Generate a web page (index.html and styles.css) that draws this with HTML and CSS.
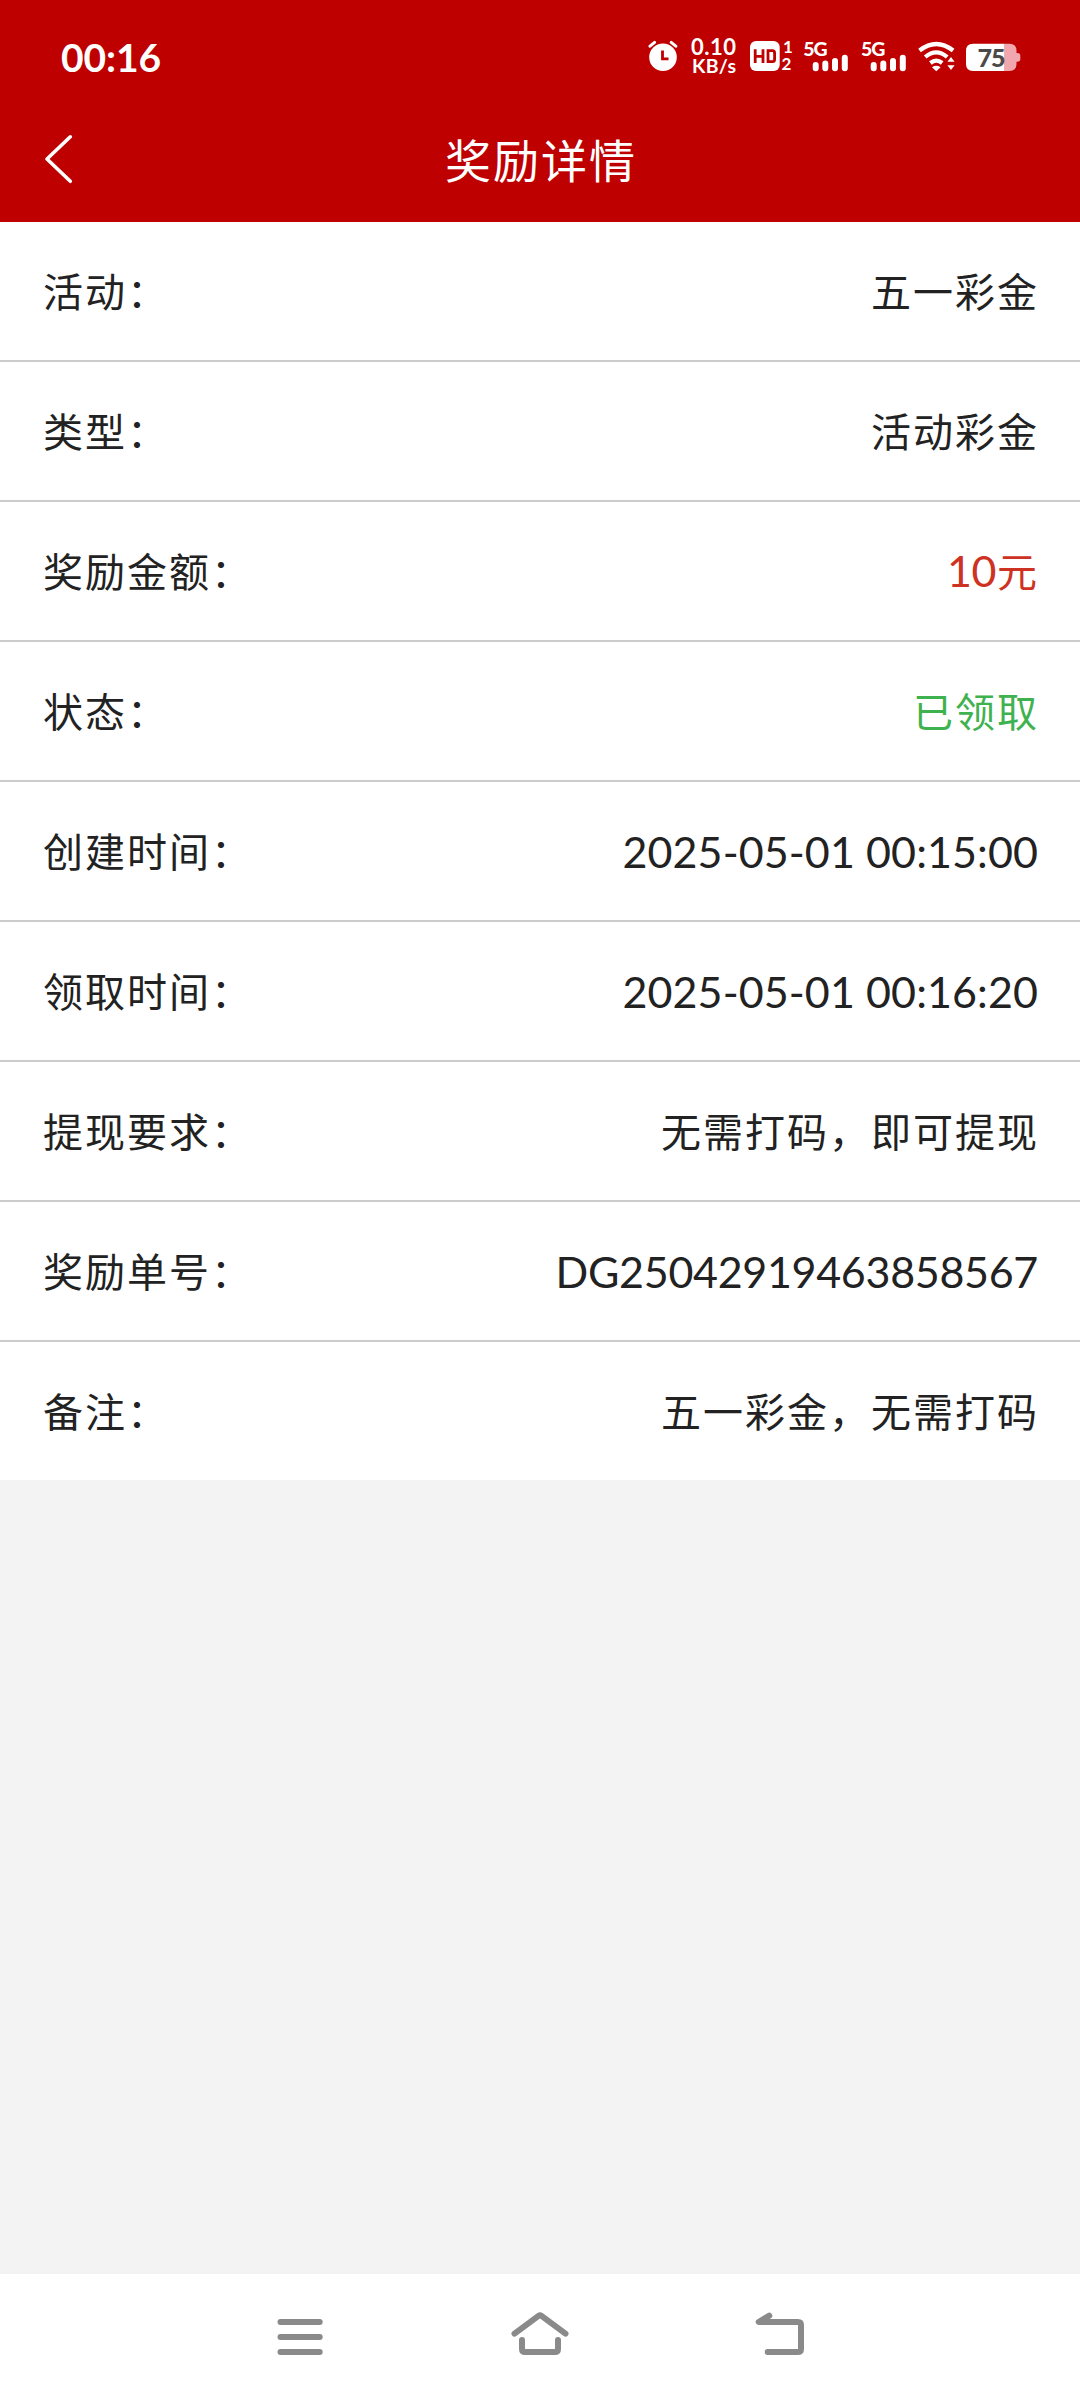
FILE: index.html
```html
<!DOCTYPE html>
<html lang="zh-CN">
<head>
<meta charset="utf-8">
<title>奖励详情</title>
<link rel="stylesheet" href="styles.css">
</head>
<body>
<div class="screen">
  <header class="header">
    <div class="status">
      <span class="clock">00:16</span>
      <div class="indicators">
        <svg width="31" height="50" viewBox="648 33 31 50">
          <circle cx="663" cy="58.3" r="13.8" fill="#fff"/>
          <path d="M650 47.2l4.6-3.8M675.8 47.2l-4.6-3.8" stroke="#fff" stroke-width="3" stroke-linecap="round"/>
          <path d="M662.5 51.5v8.3h6" fill="none" stroke="#be0000" stroke-width="2.8"/>
        </svg>
        <svg class="gap-speed" width="46" height="50" viewBox="691 33 46 50">
          <text class="speed" x="691" y="55.7" textLength="45">0.10</text>
          <text class="speed unit" x="692" y="74" textLength="44">KB/s</text>
        </svg>
        <svg class="gap-hd" width="43" height="50" viewBox="750 33 43 50">
          <rect x="750" y="42" width="29.7" height="30" rx="6" fill="#fff"/>
          <path d="M755.2 50.3v13.8M763 50.3v13.8M755.2 57.4h7.8M768 51.7h4.4q2.2 0 2.2 2.2v6.6q0 2.2-2.2 2.2h-4.4z" fill="none" stroke="#be0000" stroke-width="2.8"/>
          <text class="sim" x="783" y="54">1</text>
          <text class="sim" x="781.6" y="71.3">2</text>
        </svg>
        <svg class="gap-cell" width="46" height="50" viewBox="803 33 46 50">
          <text class="net" x="803.2" y="56.5" textLength="24.500">5G</text>
          <path d="M815.7 66v3.2M825.3 64.5v4.7M835 62v7.2M844.8 58.8v10.4" stroke="#fff" stroke-width="6" stroke-linecap="round"/>
        </svg>
        <svg class="gap-cell2" width="46" height="50" viewBox="803 33 46 50">
          <text class="net" x="803" y="56.5" textLength="24.500">5G</text>
          <path d="M815.7 66v3.2M825.3 64.5v4.7M835 62v7.2M844.8 58.8v10.4" stroke="#fff" stroke-width="6" stroke-linecap="round"/>
        </svg>
        <svg class="gap-wifi" width="38" height="50" viewBox="918 33 38 50">
          <path d="M919.5 51.5q16.8-13 33.6 0M925.2 58q11-9.3 22 0M930.4 64q5.9-4.6 11.8 0" fill="none" stroke="#fff" stroke-width="4.2"/>
          <path d="M932 68.2q4.3-2.8 8.6 0l-4.3 4z" fill="#fff"/>
          <path d="M951 58l3.6 4.8h-7.2zM951 71l3.6-4.8h-7.2z" fill="#fff"/>
        </svg>
        <svg class="gap-battery" width="55" height="50" viewBox="966 33 55 50">
          <path d="M973 44.8h31.7V72H973q-7 0-7-7V51.8q0-7 7-7z" fill="#fff"/>
          <path d="M1004.7 44.8H1009.5q7 0 7 7v2.2h1q2.8 0 2.8 2.8v3.2q0 2.8-2.8 2.8h-1V65q0 7-7 7h-4.8z" fill="#f2a6ad"/>
          <text class="level" x="977.500" y="67.800" textLength="28">75</text>
        </svg>
      </div>
    </div>
    <div class="titlebar">
      <svg class="back" width="30" height="52" viewBox="44 133 30 52">
        <path d="M70.3 136.8L47 159l23.3 22.3" fill="none" stroke="#fff" stroke-width="3.6" stroke-linecap="round" stroke-linejoin="round"/>
      </svg>
      <h1 class="title">奖励详情</h1>
    </div>
  </header>
  <main class="list">
    <div class="row"><span class="label">活动：</span><span class="value">五一彩金</span></div>
    <div class="row"><span class="label">类型：</span><span class="value">活动彩金</span></div>
    <div class="row"><span class="label">奖励金额：</span><span class="value red"><span class="amount">10</span>元</span></div>
    <div class="row"><span class="label">状态：</span><span class="value green">已领取</span></div>
    <div class="row"><span class="label">创建时间：</span><span class="value num">2025-05-01 00:15:00</span></div>
    <div class="row"><span class="label">领取时间：</span><span class="value num">2025-05-01 00:16:20</span></div>
    <div class="row"><span class="label">提现要求：</span><span class="value">无需打码，即可提现</span></div>
    <div class="row"><span class="label">奖励单号：</span><span class="value num serial">DG25042919463858567</span></div>
    <div class="row"><span class="label">备注：</span><span class="value">五一彩金，无需打码</span></div>
  </main>
  <nav class="navbar">
    <svg width="60" height="60" viewBox="270 2304 60 60"><path d="M280.500 2322h39.200M280.500 2337h39.200M280.500 2352h39.200"/></svg>
    <svg width="60" height="60" viewBox="510 2304 60 60"><path d="M514.500 2333.700l24-17.800q1.500-1.100 3 0l24 17.800M522 2340v9q0 3 3 3h30q3 0 3-3v-9"/></svg>
    <svg width="60" height="60" viewBox="750 2304 60 60"><path d="M769.300 2315.700l-10.600 6.300h39.300q3 0 3 3v24q0 3-3 3h-30.300"/></svg>
  </nav>
</div>
</body>
</html>
```
FILE: styles.css
```css
* { box-sizing: border-box; }
body { margin: 0; }
.screen {
  width: 1080px;
  height: 2400px;
  display: flex;
  flex-direction: column;
  background: #f3f3f3;
  font-family: "Noto Sans CJK SC", sans-serif;
  color: #222;
}
svg { display: block; flex: none; }
.header { height: 222px; background: #be0000; color: #fff; }
.status {
  height: 100px;
  padding: 14px 59px 0 61px;
  display: flex;
  justify-content: space-between;
  align-items: center;
}
.clock { font: 700 39px/44px Lato, sans-serif; letter-spacing: -0.1px; }
.indicators { display: flex; }
.indicators text { font-family: Lato, sans-serif; font-weight: 700; fill: #fff; }
.speed { font-size: 22px; }
.indicators .unit { font-size: 19.5px; }
.sim { font-size: 17px; }
.indicators .net { font-size: 19.5px; font-weight: 900; }
.indicators .level { font-size: 25px; fill: #4a4a4a; font-weight: 900; }
.gap-speed { margin-left: 12px; }
.gap-hd { margin-left: 13px; }
.gap-cell { margin-left: 10px; }
.gap-cell2 { margin-left: 12px; }
.gap-wifi { margin-left: 11px; }
.gap-battery { margin-left: 10px; }
.titlebar {
  height: 122px;
  padding: 0 44px;
  display: grid;
  grid-template-columns: 30px 1fr 30px;
}
.back { margin-top: 33px; }
.title {
  margin: 23px 0 0;
  text-align: center;
  font-size: 46px;
  line-height: 70px;
  font-weight: 400;
  letter-spacing: 2px;
  text-indent: 2px;
}
.row {
  height: 140px;
  padding: 0 41px 2px 43px;
  display: flex;
  justify-content: space-between;
  align-items: center;
  background: #fff;
  border-bottom: 2px solid #ccc;
  font-size: 40px;
  line-height: 60px;
  letter-spacing: 2px;
}
.row:last-child { height: 138px; border-bottom: 0; }
.num, .amount { font-family: Lato, sans-serif; font-size: 43px; letter-spacing: 0.1px; }
.num { padding: 4px 1px 0 0; }
.amount { letter-spacing: -0.5px; margin-right: 1px; }
.serial { letter-spacing: -0.3px; }
.red { color: #ce3223; }
.green { color: #3fb250; }
.navbar {
  height: 126px;
  margin-top: auto;
  padding: 30px 270px 0;
  display: flex;
  justify-content: space-between;
  background: #fff;
}
.navbar path {
  fill: none;
  stroke: #8a8a8a;
  stroke-width: 6;
  stroke-linecap: round;
  stroke-linejoin: round;
}
```
